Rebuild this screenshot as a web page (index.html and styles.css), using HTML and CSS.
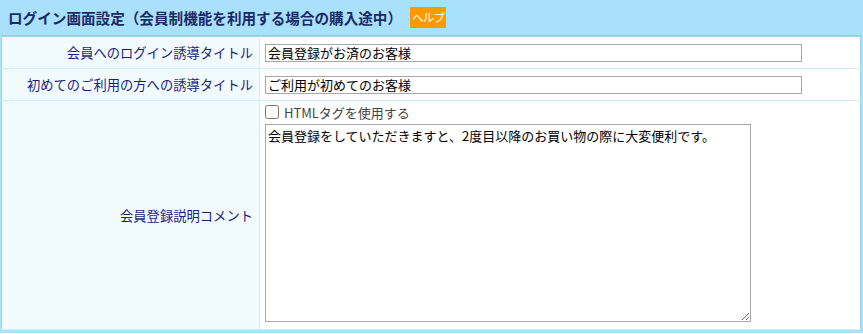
FILE: index.html
```html
<!DOCTYPE html>
<html lang="ja">
  <head>
    <meta charset="utf-8">
    <title>ログイン画面設定</title>
    <link rel="stylesheet" href="styles.css">
  </head>
  <body>
    <div class="panel">
      <h2 class="panelTitle">
        ログイン画面設定（会員制機能を利用する場合の購入途中）
        <span class="help">ヘルプ</span>
      </h2>
      <table class="setting">
        <tr class="short">
          <th>会員へのログイン誘導タイトル</th>
          <td><input type="text" class="textBox" value="会員登録がお済のお客様"></td>
        </tr>
        <tr class="short">
          <th>初めてのご利用の方への誘導タイトル</th>
          <td><input type="text" class="textBox" value="ご利用が初めてのお客様"></td>
        </tr>
        <tr>
          <th>会員登録説明コメント</th>
          <td>
            <label class="check"><input type="checkbox"> HTMLタグを使用する</label>
            <textarea class="comment">会員登録をしていただきますと、2度目以降のお買い物の際に大変便利です。</textarea>
          </td>
        </tr>
      </table>
    </div>
  </body>
</html>
```

FILE: styles.css
```css
body {
  margin: 0;
  font-family: "Noto Sans CJK JP", "Liberation Sans", sans-serif;
  font-size: 13px;
}

.panel {
  background-color: #a9e1fc;
  padding: 0 2px 3px 1px;
  width: 860px;
}

.panelTitle {
  margin: 0;
  height: 35px;
  padding-left: 7px;
  display: flex;
  align-items: center;
  font-size: 14.6px;
  font-weight: bold;
  color: #1b2a66;
  border-bottom: 1px solid #95cfe6;
}

.help {
  background-color: #ff9900;
  color: #ffffff;
  font-size: 11.5px;
  font-weight: normal;
  margin-left: 8px;
  padding: 2px 2px 3px;
  letter-spacing: -0.8px;
}

.setting {
  width: 100%;
  border-collapse: collapse;
  background-color: #ffffff;
  border: 1px solid #9fd6ea;
}

.setting th,
.setting td {
  border-bottom: 1px solid #cdeef8;
  padding: 0;
}

.setting th {
  width: 251px;
  text-align: right;
  font-weight: normal;
  font-size: 13.3px;
  color: #1d1d85;
  padding-right: 6px;
  border-right: 1px solid #cdeef8;
  background-color: #e3f5fb;
  background-image: conic-gradient(#ffffff 25%, transparent 0 50%, #ffffff 0 75%, transparent 0);
  background-size: 2px 2px;
}

.setting td {
  padding-left: 5px;
}

.short {
  height: 32px;
}

.textBox {
  width: 537px;
  height: 18px;
  box-sizing: border-box;
  border: 1px solid #a9a9a9;
  padding: 0 2px;
  font-family: inherit;
  font-size: 13px;
  display: block;
}

.check {
  display: flex;
  align-items: center;
  color: #444444;
  height: 20px;
  margin-top: 1px;
}

.check input {
  margin: 0 5px 0 0;
  width: 14px;
  height: 14px;
}

.comment {
  display: block;
  width: 486px;
  height: 198px;
  box-sizing: border-box;
  border: 1px solid #a9a9a9;
  margin: 2px 0 7px;
  padding: 1px 2px;
  font-family: inherit;
  font-size: 13px;
  resize: both;
}
```
